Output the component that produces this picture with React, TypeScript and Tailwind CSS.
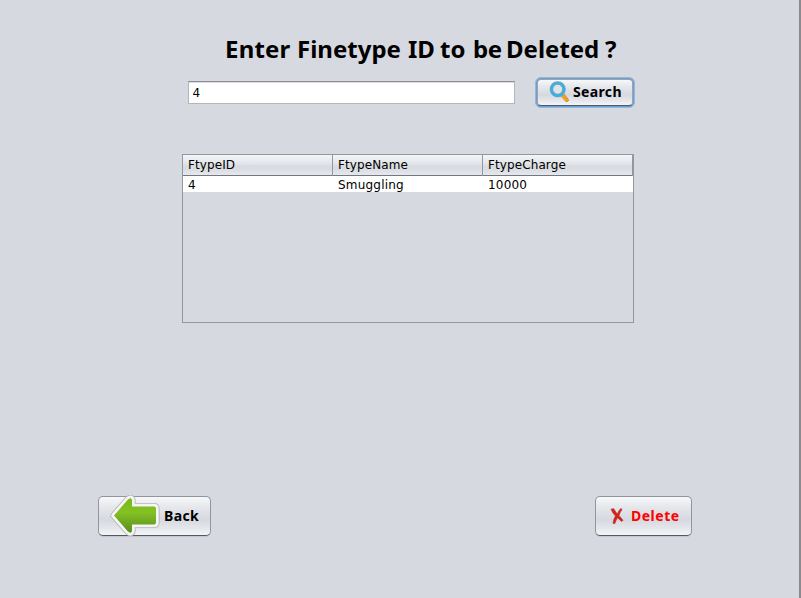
const headers = ["FtypeID", "FtypeName", "FtypeCharge"];
const row = ["4", "Smuggling", "10000"];

const face =
  "bg-[linear-gradient(#f7f8fa_0%,#e6e8ec_25%,#dadde3_50%,#d6d9df_60%,#e4e6eb_82%,#f3f5f7_100%)]";

function SearchIcon() {
  return (
    <svg width="20" height="22" viewBox="0 0 20 22" className="block shrink-0">
      <path d="M13.6 14 L17.8 19" stroke="#b98a45" strokeWidth="4" strokeLinecap="round" />
      <path d="M13.9 14.6 L17.6 18.9" stroke="#f9a01b" strokeWidth="3" strokeLinecap="round" />
      <circle cx="8.7" cy="8.3" r="6.3" fill="#dfe2e6" stroke="#7ea6be" strokeWidth="3.6" />
      <circle cx="8.7" cy="8.3" r="6.3" fill="none" stroke="#3fafe2" strokeWidth="2.5" />
    </svg>
  );
}

function BackIcon() {
  const d = "M4 20.5 L17.5 5 Q21 1.5 22 5 V11.5 H44 Q46 11.5 46 13.5 V27.5 Q46 29.5 44 29.5 H22 V36 Q21 39.5 17.5 36 Z";
  return (
    <svg width="50" height="42" viewBox="0 0 50 42" className="block shrink-0">
      <defs>
        <linearGradient id="leaf" x1="0" y1="0" x2="0" y2="1">
          <stop offset="0" stopColor="#79b51c" />
          <stop offset="0.4" stopColor="#84c223" />
          <stop offset="1" stopColor="#578d1d" />
        </linearGradient>
      </defs>
      <path d={d} stroke="#b4b5b7" strokeWidth="7.2" strokeLinejoin="round" />
      <path d={d} stroke="#f4f5f4" strokeWidth="5.4" strokeLinejoin="round" />
      <path d={d} fill="url(#leaf)" />
    </svg>
  );
}

function CrossIcon() {
  return (
    <svg width="14" height="16" viewBox="0 0 14 16" className="block shrink-0">
      <path d="M1 1.2 L3.7 0.7 Q6 4.5 7.3 6 Q8.8 2.5 10.8 0.5 L12 1.5 Q9.8 4.3 9 7.6 L13 12.2 L11.8 13.5 Q9.5 11.8 7.6 9.8 Q5.8 12.2 4.8 15.7 L3 15.3 Q3.4 11.5 5.4 7.9 Q2.5 5 1 1.2Z" fill="#e3180f" stroke="#ad4845" strokeWidth="0.8" />
    </svg>
  );
}

export default function App() {
  return (
    <main className="h-[598px] w-[801px] overflow-hidden border-r-2 border-[#8b8b8d] bg-[#d6d9df] font-['DejaVu_Sans',sans-serif] text-black">
      <h1 className="ml-[225px] flex h-[77px] whitespace-pre pt-[32px] font-['Noto_Sans','Open_Sans',sans-serif] text-[24px] font-bold leading-[34px]">
        <span className="w-[72px] tracking-[0.2px]">Enter </span>
        <span className="w-[111px]">Finetype </span>
        <span className="w-[32px]">ID </span>
        <span className="w-[33px]">to </span>
        <span className="w-[33px] tracking-[-0.3px]">be </span>
        <span className="w-[99px]">Deleted </span>
        <span>?</span>
      </h1>
      <div className="ml-[188px] flex h-[30px] items-center">
        <input
          defaultValue="4"
          className="h-[23px] w-[327px] border border-[#b4b6ba] border-t-[#8d8f93] bg-white pl-[3.5px] pt-[1px] text-[12px] shadow-[inset_0_1px_0_#dcdde0] outline-none"
        />
        <button className="ml-[20px] h-[31px] rounded-[6px] border border-[#94b8da] bg-[#6c9fce] p-px">
          <span className={`flex h-[27px] w-[96px] items-center rounded-[4px] border border-[#9ba4b0] border-b-[#4c5b70] pl-[11px] ${face}`}>
            <SearchIcon />
            <span className="ml-[4px] -translate-y-px font-['Noto_Sans',sans-serif] text-[14px] font-bold tracking-[0.35px]">Search</span>
          </span>
        </button>
      </div>
      <section className="ml-[182px] mt-[47px] h-[169px] w-[452px] border border-[#9297a1] text-[12px]">
        <div className="grid h-[21px] grid-cols-[150px_150px_150px] border-b border-[#717783] bg-[linear-gradient(#f4f5f7,#e2e4e8_45%,#d8dbe1_55%,#d9dce1_70%,#e6e8ec)]">
          {headers.map((h) => (
            <div key={h} className="border-r border-[#9297a1] pl-[5px] leading-[21px] tracking-[0.1px]">{h}</div>
          ))}
        </div>
        <div className="grid h-[16px] grid-cols-[150px_150px_150px] bg-white tracking-[0.2px]">
          {row.map((v) => (
            <div key={v} className="pl-[5px] leading-[18px]">{v}</div>
          ))}
        </div>
      </section>
      <div className="ml-[98px] mt-[173px] flex w-[594px] items-start justify-between font-['Noto_Sans',sans-serif] text-[14px] font-bold">
        <button className={`flex h-[40px] w-[113px] items-center rounded-[5px] border border-[#92959b] border-b-[#535963] pl-[11px] shadow-[0_1px_0_#c3c6cc] ${face}`}>
          <BackIcon />
          <span className="ml-[4px] -translate-y-px tracking-[0.4px]">Back</span>
        </button>
        <button className={`flex h-[40px] w-[97px] items-center rounded-[5px] border border-[#92959b] border-b-[#535963] pl-[14px] text-[#ff0000] shadow-[0_1px_0_#c3c6cc] ${face}`}>
          <CrossIcon />
          <span className="ml-[7px] -translate-y-px tracking-[0.5px]">Delete</span>
        </button>
      </div>
    </main>
  );
}
